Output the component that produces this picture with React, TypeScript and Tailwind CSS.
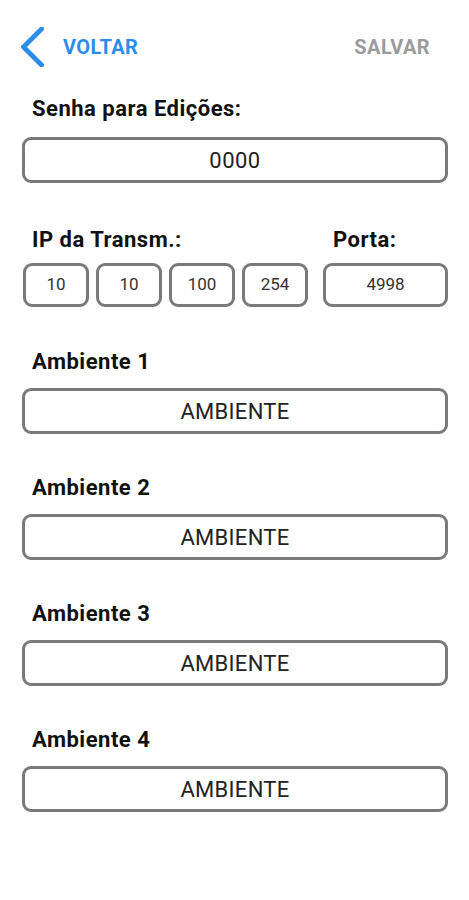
import React from "react";

const Label = ({ children, className = "" }: { children: React.ReactNode; className?: string }) => (
  <div className={"pl-[10px] text-[22px] leading-[26px] font-bold tracking-[0.5px] text-[#111] " + className}>{children}</div>
);

const Box = ({ children, className = "" }: { children: React.ReactNode; className?: string }) => (
  <div
    className={
      "flex items-center justify-center border-[3px] border-[#7a7a7a] rounded-[9px] bg-white text-[#222] " + className
    }
  >
    {children}
  </div>
);

export default function App() {
  const ambientes = [1, 2, 3, 4];
  return (
    <div
      className="w-[469px] h-[900px] bg-white"
      style={{ fontFamily: "Roboto, 'Noto Sans', sans-serif" }}
    >
      <div className="flex items-center justify-between pt-[27px] pl-[20px] pr-[39px]">
        <div className="flex items-center">
          <svg width="25" height="40" viewBox="0 0 25 40" className="block">
            <path
              d="M21.5 2 L3.5 20 L21.5 38"
              fill="none"
              stroke="#2b8ceb"
              strokeWidth="4.8"
              strokeLinecap="round"
              strokeLinejoin="round"
            />
          </svg>
          <span className="ml-[18px] text-[20px] leading-[24px] font-bold text-[#2b8ceb] tracking-[0.4px]">VOLTAR</span>
        </div>
        <span className="text-[20px] leading-[24px] font-bold text-[#9b9b9b] tracking-[0.4px]">SALVAR</span>
      </div>

      <div className="px-[22px] pr-[21px] pt-[29px]">
        <Label>Senha para Edições:</Label>
        <Box className="mt-[15px] h-[46px] text-[22px] tracking-[0.5px]">0000</Box>

        <div className="mt-[44px] flex">
          <Label className="flex-1">IP da Transm.:</Label>
          <Label className="w-[125px]">Porta:</Label>
        </div>
        <div className="mt-[10px] flex pl-[1px]">
          <div className="flex gap-[7px]">
            {["10", "10", "100", "254"].map((v, i) => (
              <Box key={i} className="w-[66px] h-[44px] text-[17px] text-[#333]">
                {v}
              </Box>
            ))}
          </div>
          <Box className="ml-auto w-[125px] h-[44px] text-[17px] text-[#333]">4998</Box>
        </div>

        {ambientes.map((n, i) => (
          <div key={n} className={i === 0 ? "mt-[42px]" : "mt-[41px]"}>
            <Label>Ambiente {n}</Label>
            <Box className="mt-[13px] h-[46px] text-[22px] tracking-[0.3px]">AMBIENTE</Box>
          </div>
        ))}
      </div>
    </div>
  );
}
